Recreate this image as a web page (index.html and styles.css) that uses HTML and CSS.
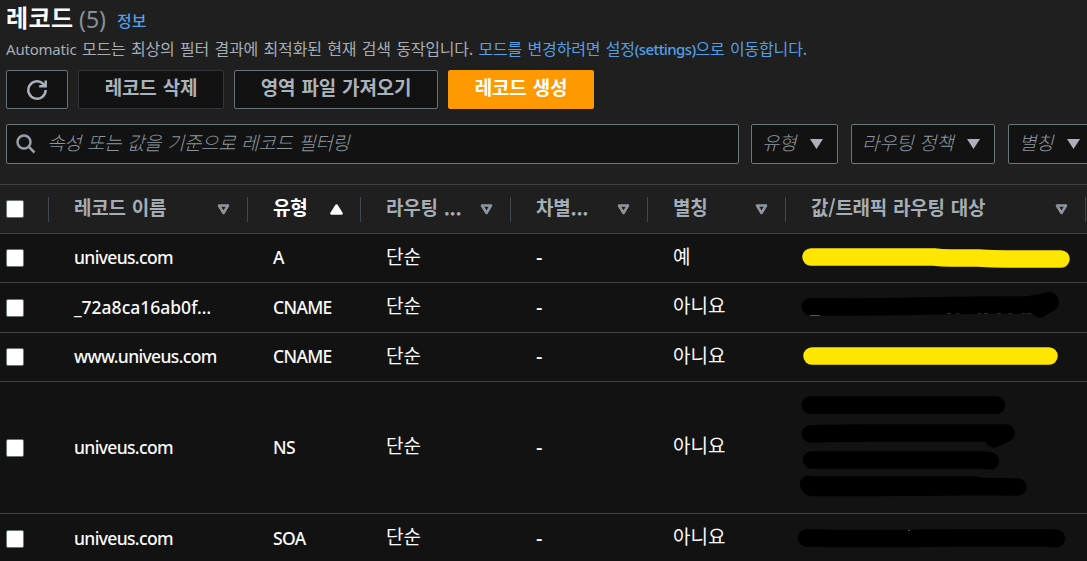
FILE: index.html
```html
<!DOCTYPE html>
<html lang="ko">

<head>
  <meta charset="UTF-8">
  <meta name="viewport" content="width=device-width, initial-scale=1.0">
  <title>레코드</title>
  <link rel="stylesheet" href="styles.css">
</head>

<body>
  <div class="panel">
    <div class="title">
      <h1>레코드</h1>
      <span class="count">(5)</span>
      <a href="#" class="info">정보</a>
    </div>
    <p class="description"><span class="auto">Automatic</span> 모드는 최상의 필터 결과에 최적화된 현재 검색 동작입니다. <a href="#">모드를 변경하려면 설정<span class="settings">(settings)</span>으로 이동합니다.</a></p>

    <div class="buttons">
      <button class="btn refresh" aria-label="새로 고침">
        <svg width="22" height="22" viewBox="0 0 22 22" fill="none" stroke="#aab3bb" stroke-width="2.5">
          <path d="M19.700 11a8.700 8.700 0 1 1-2.500-6.100l2 2.300"/>
          <path d="M19.700 1.500v5.800h-6.500"/>
        </svg>
      </button>
      <button class="btn disabled">레코드 삭제</button>
      <button class="btn import">영역 파일 가져오기</button>
      <button class="btn primary">레코드 생성</button>
    </div>

    <div class="filters">
      <div class="field search">
        <svg width="20" height="20" viewBox="0 0 20 20" fill="none" stroke="#95a0ac" stroke-width="2.5">
          <circle cx="8" cy="8" r="6.500"/>
          <path d="M12.500 12.500l6 6"/>
        </svg>
        <span>속성 또는 값을 기준으로 레코드 필터링</span>
      </div>
      <div class="field type"><span>유형</span><i class="caret"></i></div>
      <div class="field policy"><span>라우팅 정책</span><i class="caret"></i></div>
      <div class="field alias"><span>별칭</span><i class="caret"></i></div>
    </div>
  </div>

  <table>
    <colgroup>
      <col class="c-check">
      <col class="c-name">
      <col class="c-type">
      <col class="c-policy">
      <col class="c-diff">
      <col class="c-alias">
      <col class="c-value">
      <col class="c-rest">
    </colgroup>
    <thead>
      <tr>
        <th class="check"><div><i class="box"></i></div></th>
        <th><div>레코드 이름<svg class="sort" viewBox="0 0 13 11"><path d="M2 1.500h9l-4.500 7.500z"/></svg></div></th>
        <th class="sorted"><div>유형<svg class="sort" viewBox="0 0 13 11"><path d="M1.500 9.500h10l-5-8z"/></svg></div></th>
        <th><div>라우팅 ...<svg class="sort" viewBox="0 0 13 11"><path d="M2 1.500h9l-4.500 7.500z"/></svg></div></th>
        <th><div>차별...<svg class="sort" viewBox="0 0 13 11"><path d="M2 1.500h9l-4.500 7.500z"/></svg></div></th>
        <th><div>별칭<svg class="sort" viewBox="0 0 13 11"><path d="M2 1.500h9l-4.500 7.500z"/></svg></div></th>
        <th><div>값/트래픽 라우팅 대상<svg class="sort" viewBox="0 0 13 11"><path d="M2 1.500h9l-4.500 7.500z"/></svg></div></th>
        <th></th>
      </tr>
    </thead>
    <tbody>
      <tr class="row-a">
        <td class="check"><i class="box"></i></td>
        <td class="en">univeus.com</td>
        <td class="en">A</td>
        <td>단순</td>
        <td class="en dash">-</td>
        <td>예</td>
        <td class="value" colspan="2">
          <svg class="mark yellow" width="300" height="48"><path d="M25 23H148Q156 24 164 24H192Q206 25 220 25H275"/></svg>
        </td>
      </tr>
      <tr class="row-b">
        <td class="check"><i class="box"></i></td>
        <td class="en hash">_72a8ca16ab0f…</td>
        <td class="en">CNAME</td>
        <td>단순</td>
        <td class="en dash">-</td>
        <td>아니요</td>
        <td class="value" colspan="2">
          <svg class="mark" width="300" height="49">
            <path d="M24.500 24Q100 24 140 23Q190 22 242 22L263 18.500L260 22L254 26"/>
            <path d="M263 18.500v1" stroke-width="19.500"/>
            <path class="trace" d="M24 32.500h10"/>
            <path class="trace faint" d="M161 30.500h4m5 0h3m19 0h3m3 0h4m9 0h4m8 0h3m10 0h3m2 0h4"/>
          </svg>
        </td>
      </tr>
      <tr class="row-a">
        <td class="check"><i class="box"></i></td>
        <td class="en">www.univeus.com</td>
        <td class="en">CNAME</td>
        <td>단순</td>
        <td class="en dash">-</td>
        <td>아니요</td>
        <td class="value" colspan="2">
          <svg class="mark yellow" width="300" height="48"><path d="M26 23H263"/></svg>
        </td>
      </tr>
      <tr class="row-ns">
        <td class="check"><i class="box"></i></td>
        <td class="en">univeus.com</td>
        <td class="en">NS</td>
        <td>단순</td>
        <td class="en dash">-</td>
        <td>아니요</td>
        <td class="value" colspan="2">
          <svg class="mark" width="300" height="131">
            <path d="M24.500 23H210.500"/>
            <path d="M24.500 52Q60 51 90 51H220L208 57"/>
            <path d="M25.500 78H196L204.500 79"/>
            <path d="M22.500 102.500L25 105.500Q140 105.500 190 104.500L232 105"/>
            <path d="M23 103H190"/>
          </svg>
        </td>
      </tr>
      <tr class="row-b">
        <td class="check"><i class="box"></i></td>
        <td class="en">univeus.com</td>
        <td class="en">SOA</td>
        <td>단순</td>
        <td class="en dash">-</td>
        <td>아니요</td>
        <td class="value" colspan="2">
          <svg class="mark" width="300" height="49">
            <path d="M20.500 24L50 24.500H110L170 24H262L270.500 24.500"/>
            <path class="trace" d="M122 16.500h2"/>
          </svg>
        </td>
      </tr>
    </tbody>
  </table>
</body>

</html>
```
FILE: styles.css
```css
* {
  box-sizing: border-box;
}

body {
  margin: 0;
  height: 561px;
  overflow: hidden;
  background-color: #121212;
  color: #fafafa;
  font-family: "Noto Sans CJK KR", sans-serif;
  font-size: 19px;
}

a {
  color: #539fe5;
  text-decoration: none;
}

.panel {
  height: 184px;
  padding-left: 6px;
  background-color: #1f1f1f;
  overflow: hidden;
}

.title {
  display: flex;
  height: 37px;
  line-height: 36px;
}

h1 {
  margin: 0;
  width: 73px;
  font-size: 24px;
  line-height: 34px;
  font-weight: 700;
  letter-spacing: 0.4px;
}

.count {
  width: 38px;
  font-family: "Noto Sans", sans-serif;
  font-size: 23px;
  line-height: 38px;
  color: #879196;
}

.info {
  font-size: 16px;
  line-height: 41px;
  font-weight: 500;
}

.description {
  margin: 0;
  height: 33px;
  font-size: 16px;
  line-height: 23px;
  letter-spacing: -0.2px;
  word-spacing: 1.2px;
  color: #a5adb5;
  white-space: nowrap;
}

.auto,
.settings {
  font-family: "Noto Sans", sans-serif;
  font-size: 15px;
}

.settings {
  font-weight: 500;
  letter-spacing: -0.6px;
}

.buttons {
  display: flex;
  gap: 10px;
  height: 39px;
  margin-bottom: 15px;
}

.btn {
  width: 146px;
  height: 39px;
  padding: 0 0 5px;
  border: 1px solid #687078;
  border-radius: 2px;
  background-color: #121212;
  color: #aab3bb;
  font-family: inherit;
  font-size: 19px;
  font-weight: 700;
  line-height: 30px;
  letter-spacing: -0.2px;
  word-spacing: 1px;
}

.refresh {
  width: 62px;
  padding: 0;
}

.refresh svg {
  display: block;
  margin: 0 auto;
}

.disabled {
  border-color: #333538;
}

.import {
  width: 204px;
}

.primary {
  border-color: #ff9900;
  background-color: #ff9900;
  color: #fff;
}

.filters {
  display: flex;
  height: 40px;
}

.field {
  display: flex;
  flex-shrink: 0;
  align-items: center;
  justify-content: space-between;
  height: 40px;
  padding: 0 14px 0 10px;
  border: 1px solid #687878;
  border-radius: 2px;
  background-color: #121212;
  color: #8d969f;
  font-style: italic;
  font-weight: 300;
  line-height: 34px;
  letter-spacing: -0.4px;
  word-spacing: 0.9px;
  white-space: nowrap;
}

.field span {
  padding-bottom: 4px;
}

.search {
  width: 733px;
  margin-right: 12px;
  padding-left: 9px;
  justify-content: flex-start;
  gap: 11px;
}

.type {
  width: 87px;
  margin-right: 13px;
}

.policy {
  width: 144px;
  margin-right: 13px;
}

.alias {
  width: 87px;
}

.caret {
  width: 13px;
  height: 10px;
  background-color: #aab3bb;
  clip-path: polygon(0 0, 100% 0, 50% 100%);
}

table {
  width: 1087px;
  table-layout: fixed;
  border-collapse: separate;
  border-spacing: 0;
}

.c-check { width: 49px; }
.c-name { width: 199px; }
.c-type { width: 113px; }
.c-policy { width: 150px; }
.c-diff { width: 137px; }
.c-alias { width: 138px; }
.c-value { width: 300px; }
.c-rest { width: 1px; }

th {
  height: 50px;
  padding: 0;
  border-top: 1px solid #414141;
  border-bottom: 1px solid #414141;
  background-color: #1f1f1f;
  color: #a5adb5;
  font-weight: 700;
  text-align: left;
  letter-spacing: -0.25px;
  word-spacing: 0.9px;
  white-space: nowrap;
}

th div {
  display: flex;
  align-items: center;
  justify-content: space-between;
  height: 25px;
  padding: 0 17px 4px 25px;
  border-right: 1px solid #414750;
  line-height: 22px;
}

.sort {
  width: 13px;
  height: 11px;
  margin-top: 5px;
  fill: none;
  stroke: #8d969f;
  stroke-width: 2.6;
  stroke-linejoin: round;
}

.sorted {
  color: #fff;
}

.sorted .sort {
  fill: #fff;
  stroke: #fff;
}

td {
  padding: 0 0 5px 25px;
  border-bottom: 1px solid #414141;
  line-height: 26px;
  white-space: nowrap;
}

.en {
  padding-bottom: 2px;
  font-family: "Noto Sans", sans-serif;
  font-size: 17.5px;
  font-weight: 500;
  letter-spacing: -0.65px;
}

.hash {
  letter-spacing: 0;
}

.dash {
  font-size: 20px;
}

td.check,
th.check div {
  padding: 0 0 0 6px;
}

.box {
  display: block;
  width: 18px;
  height: 18px;
  border: 1px solid #687878;
  border-radius: 2px;
  background-color: #fff;
}

.row-a td { height: 49px; }
.row-b td { height: 50px; }
.row-ns td { height: 132px; }

td.value {
  padding: 0;
}

.mark {
  display: block;
  fill: none;
  stroke: #000;
  stroke-width: 17.5;
  stroke-linecap: round;
  stroke-linejoin: round;
}

.yellow {
  stroke: #ffe600;
}

.trace {
  stroke: #555;
  stroke-width: 1;
  stroke-linecap: butt;
}

.faint {
  stroke: #2c2c2c;
}
```
